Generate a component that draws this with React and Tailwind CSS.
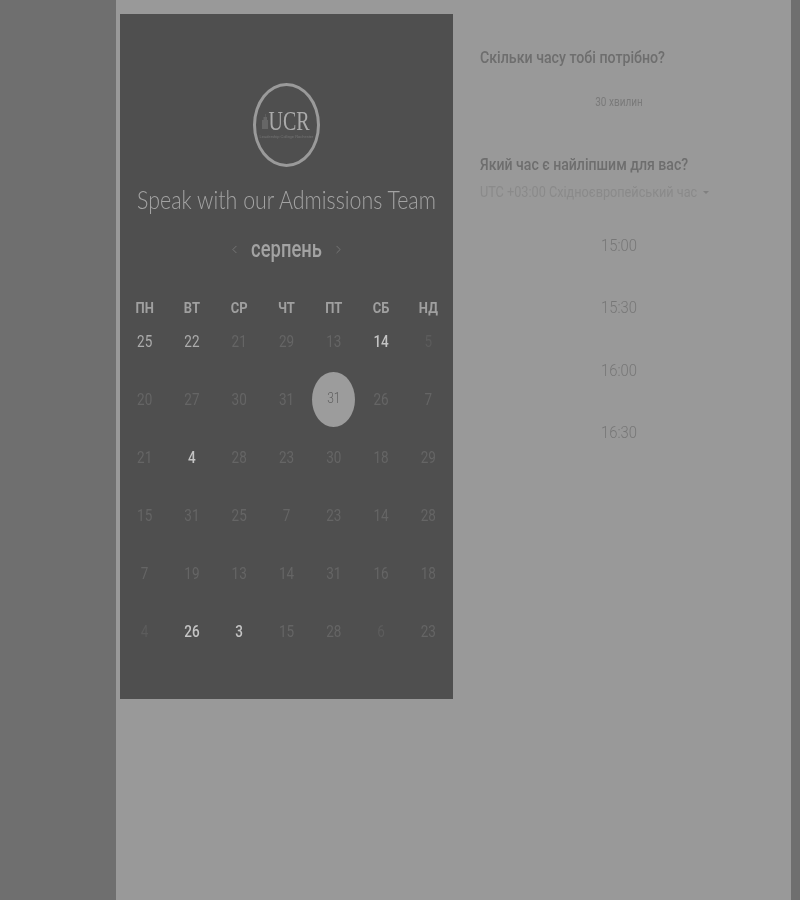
import { ChevronLeft, ChevronRight } from 'lucide-react';

const rows = [
  [['25', 1], ['22', 1], ['21'], ['29'], ['13'], ['14', 2], ['5', 3]],
  [['20'], ['27'], ['30'], ['31'], ['31', 9], ['26'], ['7']],
  [['21'], ['4', 2], ['28'], ['23'], ['30'], ['18'], ['29']],
  [['15'], ['31'], ['25'], ['7'], ['23'], ['14'], ['28']],
  [['7'], ['19'], ['13'], ['14'], ['31'], ['16'], ['18']],
  [['4', 3], ['26', 2], ['3', 2], ['15'], ['28'], ['6', 3], ['23']],
];
const heads = ['ПН', 'ВТ', 'СР', 'ЧТ', 'ПТ', 'СБ', 'НД'];
const times = ['15:00', '15:30', '16:00', '16:30'];

function Day({ n, k }) {
  if (k === 9) {
    return (
      <div className="h-[58px] flex items-center justify-center">
        <div className="w-[43px] h-[55px] rounded-[50%] bg-[#9c9c9c] flex items-center justify-center text-[12px] font-light text-[#5f5f5f]">
          <div className="scale-y-125 -mt-[3px]">{n}</div>
        </div>
      </div>
    );
  }
  const cls =
    k === 1 ? 'text-[#acacac]' : k === 2 ? 'text-[#c4c4c4] font-medium' : k === 3 ? 'text-[#5c5c5c]' : 'text-[#656565]';
  return (
    <div className={`h-[58px] flex items-center justify-center text-[13.5px] ${cls}`}>
      <div className="scale-y-125">{n}</div>
    </div>
  );
}

export default function App() {
  return (
    <div className="w-[800px] h-[900px] overflow-hidden flex bg-[#6f6f6f] font-['Roboto',sans-serif] blur-[0.5px]">
      <div className="w-[116px] shrink-0" />
      <div className="w-[675px] shrink-0 bg-[#999999] flex items-start pt-[14px] pl-[4px]">
        <div className="w-[333px] h-[685px] shrink-0 bg-[#4f4f4f] flex flex-col items-center pt-[69px]">
          <div className="w-[67px] h-[84px] rounded-[50%] border-[3px] border-[#9a9a9a] flex flex-col items-center justify-center">
            <div className="flex items-center -ml-[1px]">
              <svg width="6" height="15" viewBox="0 0 6 15">
                <path d="M0 15V6h1.5V3H3V0h.6v3H5v3h1v9z" fill="#666666" />
              </svg>
              <div className="font-['Liberation_Serif',serif] text-[#aaaaaa] text-[20px] leading-[20px] scale-y-[1.35]">UCR</div>
            </div>
            <div className="font-['Liberation_Sans',sans-serif] text-[#757575] text-[4px] leading-[4px] mt-[4px] whitespace-nowrap">Leadership College Rochester</div>
          </div>
          <h1 className="mt-[16px] font-['Lato',sans-serif] font-light text-[21.4px] leading-[34px] text-[#a3a3a3] whitespace-nowrap scale-y-[1.15]">Speak with our Admissions Team</h1>
          <div className="mt-[15px] h-[34px] flex items-center w-[117px] justify-between">
            <ChevronLeft size={13} strokeWidth={1.5} className="text-[#7d7d7d]" />
            <div className="text-[18.4px] font-medium text-[#a3a3a3] scale-y-125">серпень</div>
            <ChevronRight size={13} strokeWidth={1.5} className="text-[#7d7d7d]" />
          </div>
          <div className="mt-[27px] w-[331px] grid grid-cols-7 h-[32px] items-center text-center text-[13px] font-bold text-[#a0a0a0]">
            {heads.map((h) => (
              <div key={h} className="scale-y-110">{h}</div>
            ))}
          </div>
          <div className="w-[331px] -mt-[13px] grid grid-cols-7">
            {rows.flat().map(([n, k], i) => (
              <Day key={i} n={n} k={k} />
            ))}
          </div>
        </div>
        <div className="ml-[27px] w-[278px] flex flex-col pt-[32px]">
          <h2 className="text-[14.2px] leading-[22px] font-medium text-[#6e6e6e] whitespace-nowrap origin-left scale-y-[1.2]">Скільки часу тобі потрібно?</h2>
          <div className="mt-[26px] text-center text-[10px] leading-[16px] text-[#7a7a7a] scale-y-[1.2]">30 хвилин</div>
          <h2 className="mt-[43px] text-[14.1px] leading-[22px] font-medium text-[#6e6e6e] whitespace-nowrap origin-left scale-y-[1.2]">Який час є найліпшим для вас?</h2>
          <div className="mt-[8px] flex items-center text-[12.7px] leading-[18px] text-[#8a8a8a] whitespace-nowrap">
            <div className="scale-y-[1.15] origin-left">UTC +03:00 Східноєвропейський час</div>
            <div className="ml-[6px] w-0 h-0 border-x-[3px] border-x-transparent border-t-[3px] border-t-[#808080]" />
          </div>
          <div className="mt-[13px] flex flex-col">
            {times.map((t) => (
              <div key={t} className="h-[62.3px] flex items-center justify-center text-[14.8px] font-light text-[#777777]">
                <div className="scale-y-[1.15]">{t}</div>
              </div>
            ))}
          </div>
        </div>
      </div>
    </div>
  );
}
